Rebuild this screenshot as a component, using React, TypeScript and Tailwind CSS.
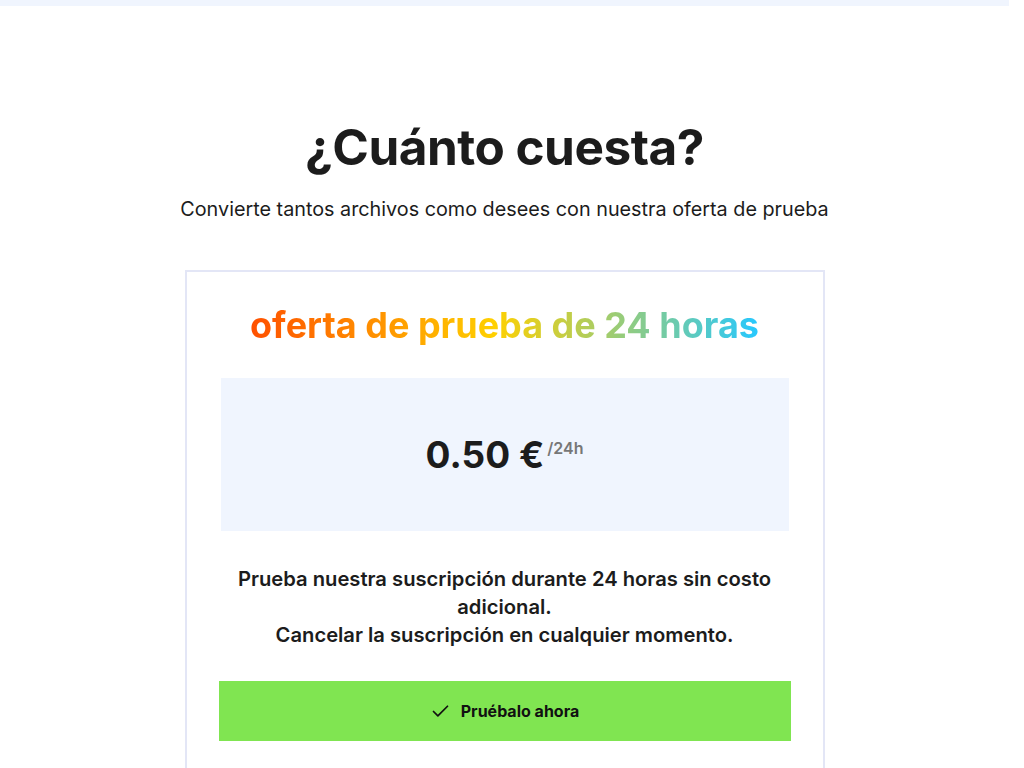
import { FC, ReactElement } from "react";
import { Check } from "lucide-react";

const Pricing: FC = (): ReactElement => {
  return (
    <section className="flex flex-col items-center pt-[112px] pb-[120px]">
      <h2 className="text-[49.5px] leading-[58px] font-bold tracking-[-0.5px] text-[#1c1c1c]">¿Cuánto cuesta?</h2>
      <p className="mt-[19px] text-[19.8px] leading-[28px] text-[#1c1c1c]">Convierte tantos archivos como desees con nuestra oferta de prueba</p>

      <div className="mt-[47px] w-[640px] border-2 border-[#e3e6f6] px-[34px] pt-[29px] pb-[40px]">
        <h3 className="mx-auto w-fit bg-[linear-gradient(to_right,#ff5000,#ffd000_48%,#26c8ff)] bg-clip-text text-center text-[36px] leading-[48px] font-bold text-transparent">
          oferta de prueba de 24 horas
        </h3>

        <div className="mt-[29px] flex h-[153px] items-center justify-center bg-[#f0f5fe]">
          <span className="text-[37px] font-bold text-[#1c1c1c]">0.50 €</span>
          <span className="-mt-[14px] ml-[3px] text-[16px] font-semibold text-[#777]">/24h</span>
        </div>

        <p className="mt-[34px] text-center text-[20.2px] leading-[28px] font-semibold text-[#1c1c1c]">
          Prueba nuestra suscripción durante 24 horas sin costo adicional.
          <br />
          Cancelar la suscripción en cualquier momento.
        </p>

        <button className="-mx-[2px] mt-[32px] flex h-[60px] w-[calc(100%+4px)] items-center justify-center gap-[10px] bg-[#80e551] text-[16px] font-bold text-[#111]">
          <Check size={21} strokeWidth={2} />
          Pruébalo ahora
        </button>
      </div>
    </section>
  );
};

export default function App(): ReactElement {
  return (
    <div className="min-h-screen bg-white pr-[15px]" style={{ fontFamily: "Inter, 'Noto Sans', sans-serif" }}>
      <div className="h-[6px] bg-[#f0f5fe]" />
      <Pricing />
    </div>
  );
}
